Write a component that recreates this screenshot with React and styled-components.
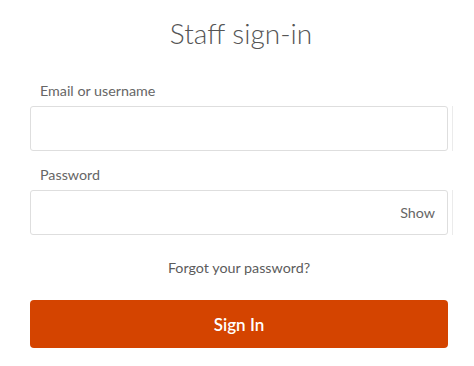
import React from "react";
import styled, { createGlobalStyle } from "styled-components";

const GlobalStyle = createGlobalStyle`
	html, body {
		margin: 0;
		padding: 0;
		background: #ffffff;
	}
	body {
		font-family: Lato, "Open Sans", "Liberation Sans", sans-serif;
	}
`;

export default function App() {
	return (
		<>
			<GlobalStyle />
			<Page>
				<Title>Staff sign-in</Title>
				<Form onSubmit={(e) => e.preventDefault()}>
					<Label htmlFor="user">Email or username</Label>
					<FieldRow>
						<InputBox>
							<Input id="user" type="text" />
						</InputBox>
						<Edge />
					</FieldRow>

					<Label htmlFor="pass" $top={15}>
						Password
					</Label>
					<FieldRow>
						<InputBox>
							<Input id="pass" type="password" />
							<ShowToggle type="button">Show</ShowToggle>
						</InputBox>
						<Edge />
					</FieldRow>

					<Forgot href="#">Forgot your password?</Forgot>
					<SubmitButton type="submit">Sign In</SubmitButton>
				</Form>
			</Page>
		</>
	);
}

const Page = styled.div`
	width: 474px;
	height: 366px;
	box-sizing: border-box;
	padding: 16px 26px 0 30px;
	display: flex;
	flex-direction: column;
`;

const Title = styled.h1`
	margin: 0 0 32px;
	text-align: center;
	font-size: 28px;
	line-height: 34px;
	font-weight: 300;
	color: #555;
	padding-left: 4px;
`;

const Form = styled.form`
	display: flex;
	flex-direction: column;
`;

const Label = styled.label`
	margin: ${(p) => p.$top || 0}px 0 6px 10px;
	font-size: 14.3px;
	line-height: 18px;
	color: #666;
`;

const FieldRow = styled.div`
	display: flex;
	align-items: stretch;
	width: 426px;
`;

const InputBox = styled.div`
	flex: 0 0 418px;
	height: 45px;
	box-sizing: border-box;
	display: flex;
	align-items: center;
	border: 1px solid #dedede;
	border-radius: 3px;
	background: #fff;
`;

const Edge = styled.div`
	width: 1px;
	margin-left: 4px;
	background: #ebebeb;
`;

const Input = styled.input`
	flex: 1;
	height: 100%;
	border: none;
	outline: none;
	background: transparent;
	padding: 0 10px;
	font: inherit;
	font-size: 14px;
`;

const ShowToggle = styled.button`
	border: none;
	background: none;
	padding: 0 12px 0 8px;
	font-family: inherit;
	font-size: 14.3px;
	color: #666;
	cursor: pointer;
`;

const Forgot = styled.a`
	align-self: center;
	margin: 24px 0 23px;
	font-size: 14.3px;
	line-height: 18px;
	color: #5c5c5c;
	text-decoration: none;
`;

const SubmitButton = styled.button`
	width: 418px;
	height: 48px;
	border: none;
	border-radius: 4px;
	background: #d44400;
	color: #fff;
	font-family: inherit;
	font-size: 17px;
	font-weight: 600;
	cursor: pointer;
`;
